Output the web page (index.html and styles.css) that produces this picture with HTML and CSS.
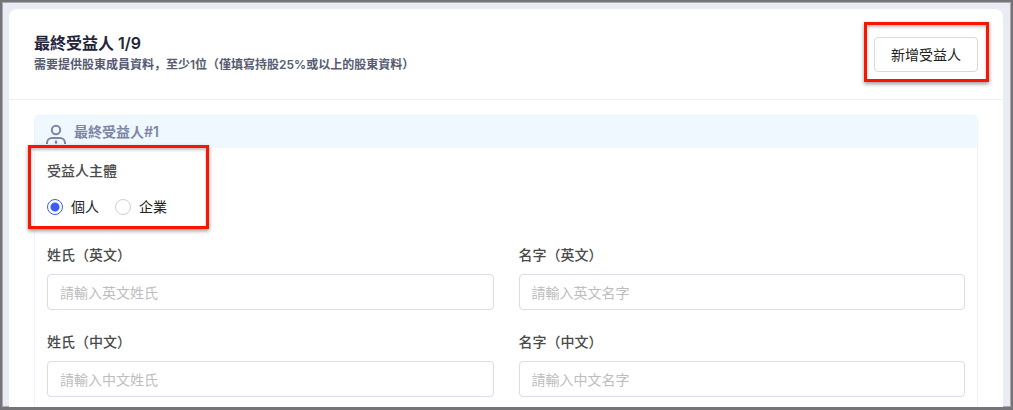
FILE: index.html
```html
<!DOCTYPE html>
<html lang="zh-CN">
<head>
  <meta charset="UTF-8">
  <meta name="viewport" content="width=device-width, initial-scale=1">
  <title>最終受益人</title>
  <link rel="stylesheet" href="styles.css">
</head>
<body>
  <div class="window">
    <main class="card">
      <header class="card-header">
        <div>
          <h1>最終受益人 1/9</h1>
          <p class="hint">需要提供股東成員資料，至少1位（僅填寫持股25%或以上的股東資料）</p>
        </div>
        <div class="marked mark-add">
          <button type="button" class="add-btn">新增受益人</button>
        </div>
      </header>

      <form class="panel">
        <h2 class="panel-title">
          <svg width="20" height="24" viewBox="0 0 20 24" fill="none" stroke="#7c86a5" stroke-width="2" aria-hidden="true">
            <circle cx="10" cy="6" r="4.2"/>
            <path d="M1 20v-1c0-3 2.200-5 5-5h8c2.800 0 5 2 5 5v1"/>
            <path d="M10 15.500l1.500 2.700L10 20.500l-1.500-2.300z" fill="#7c86a5" stroke="none"/>
          </svg>
          <span>最終受益人#1</span>
        </h2>

        <div class="panel-body">
          <div class="marked mark-entity">
            <fieldset>
              <legend>受益人主體</legend>
              <div class="radios">
                <label><input type="radio" name="entity" value="person" checked>個人</label>
                <label><input type="radio" name="entity" value="company">企業</label>
              </div>
            </fieldset>
          </div>

          <div class="fields">
            <div class="field">
              <label for="lastEn">姓氏（英文）</label>
              <input type="text" id="lastEn" placeholder="請輸入英文姓氏">
            </div>
            <div class="field">
              <label for="firstEn">名字（英文）</label>
              <input type="text" id="firstEn" placeholder="請輸入英文名字">
            </div>
            <div class="field">
              <label for="lastZh">姓氏（中文）</label>
              <input type="text" id="lastZh" placeholder="請輸入中文姓氏">
            </div>
            <div class="field">
              <label for="firstZh">名字（中文）</label>
              <input type="text" id="firstZh" placeholder="請輸入中文名字">
            </div>
          </div>
        </div>
      </form>
    </main>
  </div>
</body>
</html>
```
FILE: styles.css
```css
*, *::after {
  box-sizing: border-box;
}
body {
  margin: 0;
  font-family: Inter, "Noto Sans CJK SC", sans-serif;
  font-size: 14px;
  line-height: 20px;
  color: #222;
}
button, input {
  font: inherit;
}
.window {
  height: 100vh;
  overflow: hidden;
  padding: 7px 8px 0 7px;
  background: #e9ecf2;
  border: 2px solid #757478;
  border-bottom-width: 3px;
  box-shadow: inset 0 0 0 1px #a9aab0;
}
.card {
  min-height: 100%;
  background: #fff;
  border-radius: 8px 8px 0 0;
}
.card-header {
  display: flex;
  justify-content: space-between;
  align-items: flex-start;
  padding: 22px 25px 24px;
  border-bottom: 1px solid #f0f1f4;
}
h1 {
  margin: 0;
  font-size: 16px;
  line-height: 24px;
  font-weight: 600;
  color: #22243a;
}
.hint {
  margin: 0;
  font-size: 12px;
  line-height: 20px;
  font-weight: 600;
  color: #555b70;
}
/* red highlight frame drawn round a control */
.marked {
  position: relative;
}
.marked::after {
  content: "";
  position: absolute;
  border: 3px solid #fb1400;
  box-shadow: 0 2px 4px rgba(0,0,0,0.4), inset 0 2px 3px rgba(0,0,0,0.25);
  pointer-events: none;
}
.mark-add {
  padding-top: 6px;
}
.mark-add::after {
  inset: -9px -11px -10px -10px;
}
.mark-entity::after {
  inset: -14px auto -10px -19px;
  width: 181px;
}
.add-btn {
  display: block;
  height: 35px;
  padding: 0 16px;
  background: #fff;
  color: #222;
  border: 1px solid #d9d9d9;
  border-radius: 4px;
}
.panel {
  margin: 15px 25px 0;
  border: 1px solid #edf4fd;
  border-radius: 4px;
}
.panel-title {
  display: flex;
  align-items: center;
  gap: 8px;
  height: 32px;
  margin: 0;
  padding: 0 11px;
  background: #eff7ff;
  font-size: 14px;
  font-weight: 600;
  color: #7c86a5;
}
.panel-title svg {
  align-self: flex-end;
}
.panel-body {
  padding: 11px 12px;
}
fieldset {
  margin: 0;
  padding: 0;
  border: 0;
}
legend {
  padding: 0;
  line-height: 24px;
  font-weight: 500;
  color: #4a4a4a;
}
.radios {
  display: flex;
  gap: 16px;
  padding-top: 12px;
}
.radios label {
  display: flex;
  align-items: center;
  gap: 8px;
  line-height: 24px;
}
.radios input {
  appearance: none;
  width: 16px;
  height: 16px;
  margin: 0;
  border: 1px solid #d0d0d4;
  border-radius: 50%;
  background: #fff;
}
.radios input:checked {
  border-color: #3c5bfb;
  background: radial-gradient(circle, #3c5bfb 4px, #fff 5px);
}
.fields {
  display: grid;
  grid-template-columns: 1fr 1fr;
  gap: 20px 25px;
  padding-top: 24px;
}
.field {
  display: flex;
  flex-direction: column;
  gap: 7px;
}
.field label {
  line-height: 24px;
  font-weight: 500;
  color: #4a4a4a;
}
.field input {
  width: 100%;
  height: 36px;
  padding: 0 12px;
  border: 1px solid #d9dcea;
  border-radius: 4px;
  background: #fff;
}
.field input::placeholder {
  color: #bdbdbd;
}
```
